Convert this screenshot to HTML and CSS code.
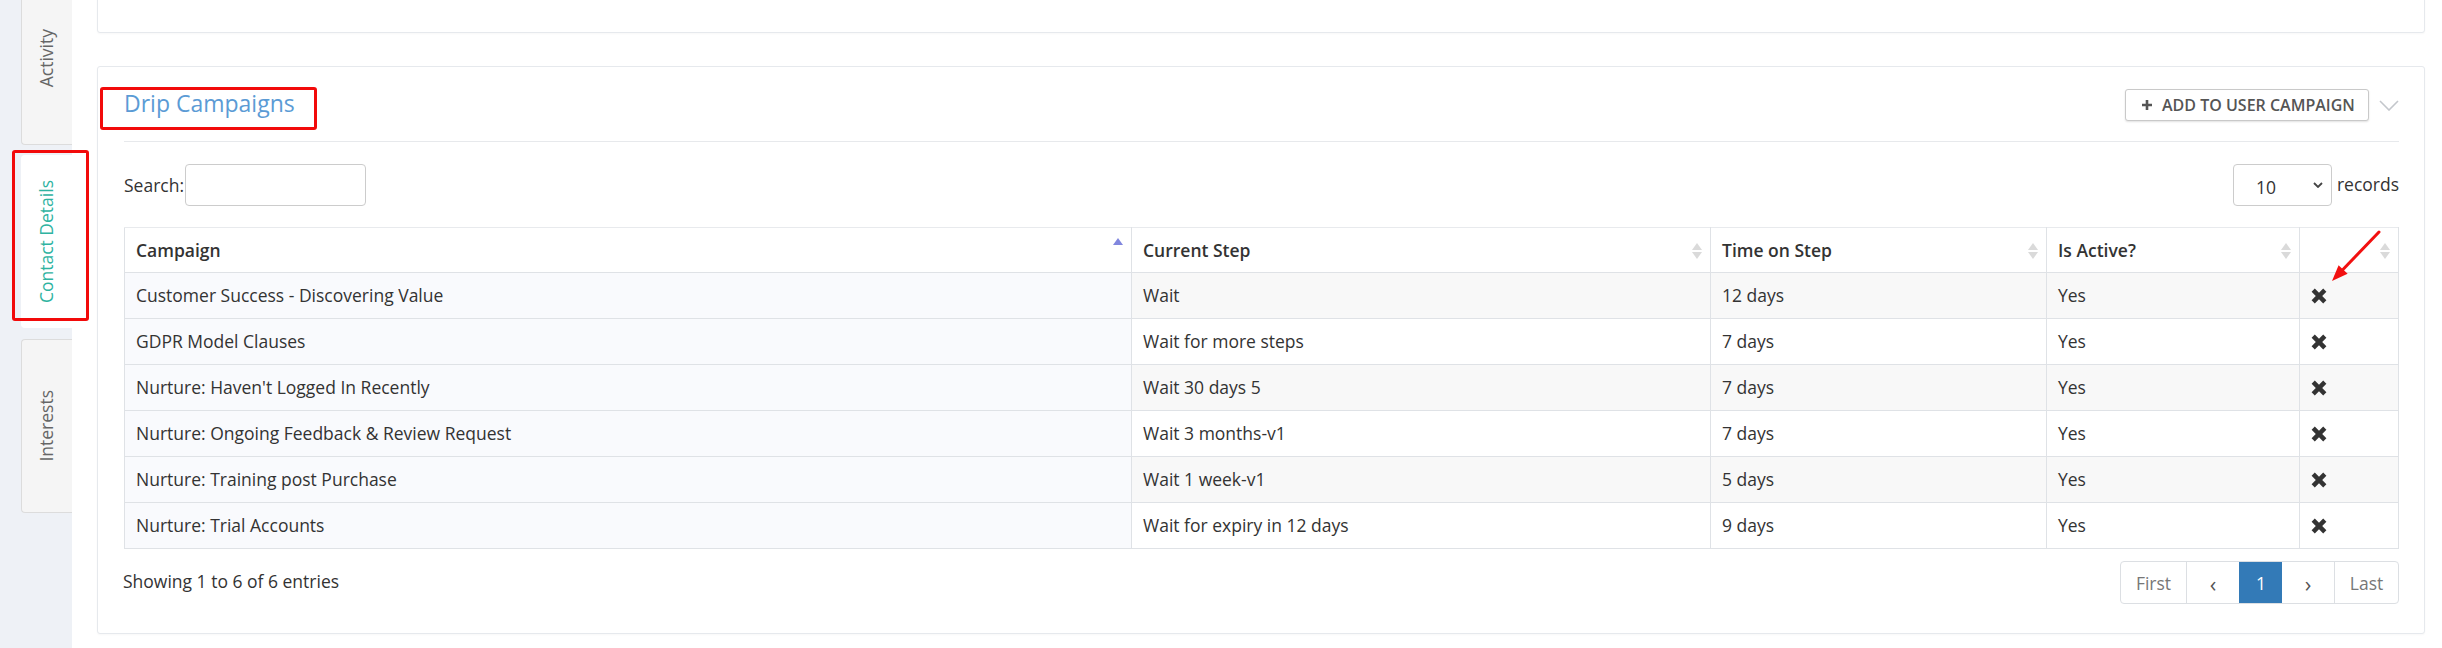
FILE: index.html
```html
<!DOCTYPE html>
<html>
<head>
<meta charset="utf-8">
<link rel="stylesheet" href="styles.css">
</head>
<body>
<div class="page">
  <aside class="sidebar">
    <div class="tabs">
      <div class="tab tab-activity"><span class="tab-label">Activity</span></div>
      <div class="tab tab-active"><span class="tab-label">Contact Details</span></div>
      <div class="tab tab-interests"><span class="tab-label">Interests</span></div>
    </div>
  </aside>
  <main class="content">
    <section class="card card-top"></section>
    <section class="card drip">
      <header class="drip-head">
        <h2 class="drip-title">Drip Campaigns</h2>
        <div class="head-actions">
          <button class="btn-add"><svg class="plus" viewBox="0 0 10 10" width="10" height="10"><path d="M3.7 0h2.6v3.7H10v2.6H6.3V10H3.7V6.3H0V3.7h3.7z"/></svg>ADD TO USER CAMPAIGN</button>
          <svg class="collapse" viewBox="0 0 20 11" width="20" height="11"><polyline points="1,1 10,10 19,1" fill="none" stroke="#c4c7cc" stroke-width="1.6"/></svg>
        </div>
      </header>
      <div class="controls">
        <label class="search">Search:<span class="search-input"></span></label>
        <div class="length">
          <span class="select"><span class="select-val">10</span><svg viewBox="0 0 10 6" width="10" height="6"><polyline points="1,1 5,5 9,1" fill="none" stroke="#444" stroke-width="1.8"/></svg></span>
          <span class="records">records</span>
        </div>
      </div>
      <table class="grid">
        <colgroup>
          <col class="c1"><col class="c2"><col class="c3"><col class="c4"><col class="c5">
        </colgroup>
        <thead>
          <tr>
            <th><div class="th-in"><span>Campaign</span><span class="sort asc"><i class="up"></i><i class="down"></i></span></div></th>
            <th><div class="th-in"><span>Current Step</span><span class="sort"><i class="up"></i><i class="down"></i></span></div></th>
            <th><div class="th-in"><span>Time on Step</span><span class="sort"><i class="up"></i><i class="down"></i></span></div></th>
            <th><div class="th-in"><span>Is Active?</span><span class="sort"><i class="up"></i><i class="down"></i></span></div></th>
            <th><div class="th-in"><span></span><span class="sort"><i class="up"></i><i class="down"></i></span></div></th>
          </tr>
        </thead>
        <tbody>
          <tr class="odd"><td class="sorted">Customer Success - Discovering Value</td><td>Wait</td><td>12 days</td><td>Yes</td><td><svg class="xicon" viewBox="0 0 16 16" width="16" height="16"><path d="M0.6 3.8L3.8 0.6L8 4.8L12.2 0.6L15.4 3.8L11.2 8L15.4 12.2L12.2 15.4L8 11.2L3.8 15.4L0.6 12.2L4.8 8Z"/></svg></td></tr>
          <tr><td class="sorted">GDPR Model Clauses</td><td>Wait for more steps</td><td>7 days</td><td>Yes</td><td><svg class="xicon" viewBox="0 0 16 16" width="16" height="16"><path d="M0.6 3.8L3.8 0.6L8 4.8L12.2 0.6L15.4 3.8L11.2 8L15.4 12.2L12.2 15.4L8 11.2L3.8 15.4L0.6 12.2L4.8 8Z"/></svg></td></tr>
          <tr class="odd"><td class="sorted">Nurture: Haven't Logged In Recently</td><td>Wait 30 days 5</td><td>7 days</td><td>Yes</td><td><svg class="xicon" viewBox="0 0 16 16" width="16" height="16"><path d="M0.6 3.8L3.8 0.6L8 4.8L12.2 0.6L15.4 3.8L11.2 8L15.4 12.2L12.2 15.4L8 11.2L3.8 15.4L0.6 12.2L4.8 8Z"/></svg></td></tr>
          <tr><td class="sorted">Nurture: Ongoing Feedback &amp; Review Request</td><td>Wait 3 months-v1</td><td>7 days</td><td>Yes</td><td><svg class="xicon" viewBox="0 0 16 16" width="16" height="16"><path d="M0.6 3.8L3.8 0.6L8 4.8L12.2 0.6L15.4 3.8L11.2 8L15.4 12.2L12.2 15.4L8 11.2L3.8 15.4L0.6 12.2L4.8 8Z"/></svg></td></tr>
          <tr class="odd"><td class="sorted">Nurture: Training post Purchase</td><td>Wait 1 week-v1</td><td>5 days</td><td>Yes</td><td><svg class="xicon" viewBox="0 0 16 16" width="16" height="16"><path d="M0.6 3.8L3.8 0.6L8 4.8L12.2 0.6L15.4 3.8L11.2 8L15.4 12.2L12.2 15.4L8 11.2L3.8 15.4L0.6 12.2L4.8 8Z"/></svg></td></tr>
          <tr><td class="sorted">Nurture: Trial Accounts</td><td>Wait for expiry in 12 days</td><td>9 days</td><td>Yes</td><td><svg class="xicon" viewBox="0 0 16 16" width="16" height="16"><path d="M0.6 3.8L3.8 0.6L8 4.8L12.2 0.6L15.4 3.8L11.2 8L15.4 12.2L12.2 15.4L8 11.2L3.8 15.4L0.6 12.2L4.8 8Z"/></svg></td></tr>
        </tbody>
      </table>
      <div class="foot">
        <div class="info">Showing 1 to 6 of 6 entries</div>
        <nav class="pager">
          <span class="pg pg-first">First</span>
          <span class="pg pg-prev">&lsaquo;</span>
          <span class="pg pg-cur">1</span>
          <span class="pg pg-next">&rsaquo;</span>
          <span class="pg pg-last">Last</span>
        </nav>
      </div>
    </section>
  </main>
  <div class="mark mark-tab"></div>
  <div class="mark mark-title"></div>
  <svg class="arrow" viewBox="0 0 70 65" width="70" height="65"><line x1="59" y1="7" x2="22" y2="45.5" stroke="#f21010" stroke-width="3" stroke-linecap="round"/><polygon points="12,56 27.6,48.8 18.6,40.2" fill="#f21010"/></svg>
</div>
</body>
</html>
```
FILE: styles.css
```css
* { box-sizing: border-box; }
html, body { margin: 0; padding: 0; }
body {
  width: 2442px;
  height: 648px;
  overflow: hidden;
  font-family: "Open Sans", "DejaVu Sans", sans-serif;
  font-size: 17.5px;
  color: #333;
  background: #fff;
}
.page {
  position: relative;
  display: flex;
  width: 2442px;
  height: 648px;
  overflow: hidden;
}
.sidebar {
  width: 72px;
  flex: none;
  background: #eef1f6;
  padding-left: 21px;
}
.tabs {
  display: flex;
  flex-direction: column;
  margin-top: -29px;
}
.tab {
  width: 51px;
  height: 174px;
  display: flex;
  align-items: center;
  justify-content: center;
  background: #f5f5f5;
  border: 1px solid #dcdcdc;
  border-right: none;
  border-radius: 4px 0 0 4px;
  color: #666;
}
.tab-activity { margin-bottom: 10px; }
.tab-active {
  height: 173px;
  margin-bottom: 11px;
  background: #fff;
  border-color: #fff;
  color: #2fb3a1;
  width: 51px;
}
.tab-label {
  writing-mode: vertical-rl;
  transform: rotate(180deg);
  font-size: 17.5px;
  line-height: 1;
  white-space: nowrap;
}
.content {
  flex: 1;
  background: #fff;
  padding: 0 18px 0 25px;
}
.card {
  background: #fff;
  border: 1px solid #e6e9ed;
  border-radius: 3px;
  box-shadow: 0 1px 2px rgba(0,0,0,0.03);
}
.card-top {
  height: 53px;
  margin-top: -20px;
}
.drip {
  margin-top: 33px;
  height: 568px;
  padding: 0 25px 0 26px;
}
.drip-head {
  height: 75px;
  display: flex;
  align-items: center;
  justify-content: space-between;
  border-bottom: 1px solid #e7e9ec;
}
.drip-title {
  margin: 0 0 3px 0;
  font-size: 23px;
  font-weight: 400;
  color: #5b9bd5;
  line-height: 30px;
}
.head-actions {
  display: flex;
  align-items: center;
  gap: 10px;
  padding-top: 2px;
}
.btn-add {
  display: flex;
  align-items: center;
  height: 32px;
  width: 244px;
  padding: 0 0 0 16px;
  background: #fff;
  border: 1px solid #c9c9c9;
  border-radius: 3px;
  box-shadow: 0 1px 2px rgba(0,0,0,0.12);
  font-family: "Open Sans", sans-serif;
  font-size: 16px;
  font-weight: 600;
  color: #555;
  letter-spacing: 0;
}
.plus { fill: #555; margin-right: 10px; }
.controls {
  margin-top: 22px;
  height: 42px;
  display: flex;
  align-items: center;
  justify-content: space-between;
}
.search {
  display: flex;
  align-items: center;
  color: #333;
}
.search-input {
  display: block;
  width: 181px;
  height: 42px;
  border: 1px solid #ccc;
  border-radius: 4px;
  margin-left: 1px;
}
.length {
  display: flex;
  align-items: center;
  gap: 5px;
}
.records { margin-top: -3px; }
.select {
  width: 99px;
  height: 42px;
  border: 1px solid #ccc;
  border-radius: 4px;
  display: flex;
  align-items: center;
  justify-content: space-between;
  padding: 0 8px 0 22px;
}
.select-val { padding-top: 4px; }
.grid {
  margin-top: 21px;
  width: 100%;
  border-collapse: collapse;
  table-layout: fixed;
  border: 1px solid #e1e4e8;
}
.c1 { width: 1007px; }
.c2 { width: 579px; }
.c3 { width: 336px; }
.c4 { width: 253px; }
.c5 { width: 99px; }
.grid th, .grid td {
  border: 1px solid #dfe2e6;
  text-align: left;
  vertical-align: middle;
  white-space: nowrap;
}
.grid th {
  padding: 8px 8px 8px 11px;
  line-height: 28px;
  font-weight: 600;
  color: #333;
}
.grid td {
  padding: 8px 11px;
  line-height: 29px;
  color: #333;
}
.grid thead th { border-top-color: #e8eaed; }
.th-in {
  display: flex;
  align-items: center;
  justify-content: space-between;
}
.sort {
  display: flex;
  flex-direction: column;
  gap: 2px;
  margin-top: 2px;
}
.sort i {
  display: block;
  width: 0;
  height: 0;
  border-left: 5px solid transparent;
  border-right: 5px solid transparent;
}
.sort .up { border-bottom: 7px solid #dadada; }
.sort .down { border-top: 7px solid #dadada; }
.sort.asc { margin-top: -8px; }
.sort.asc .up { border-bottom-color: #8187de; }
.sort.asc .down { border-top-color: transparent; }
.grid tbody tr.odd td { background: #f8f8f8; }
.grid tbody td.sorted, .grid tbody tr.odd td.sorted { background: #f9fafd; }
.xicon { display: block; fill: #333; margin-left: 0; }
.foot {
  margin-top: 12px;
  display: flex;
  align-items: center;
  justify-content: space-between;
}
.info { margin-left: -1px; margin-top: -3px; }
.pager {
  display: flex;
  height: 43px;
  border: 1px solid #dcdfe3;
  border-radius: 4px;
  overflow: hidden;
}
.pg {
  display: flex;
  align-items: center;
  justify-content: center;
  color: #777;
  border-left: 1px solid #dcdfe3;
}
.pg:first-child { border-left: none; }
.pg-first { width: 65px; }
.pg-prev { width: 53px; font-size: 22px; color: #555; }
.pg-cur { width: 43px; background: #337ab7; color: #fff; border-left-color: #337ab7; }
.pg-next { width: 52px; font-size: 22px; color: #555; border-left: none; }
.pg-last { width: 64px; }
.mark {
  position: absolute;
  border: 3px solid #f20a0a;
  border-radius: 3px;
}
.mark-tab { left: 12px; top: 150px; width: 77px; height: 171px; }
.mark-title { left: 100px; top: 87px; width: 217px; height: 43px; }
.arrow { position: absolute; left: 2320px; top: 225px; }
```
